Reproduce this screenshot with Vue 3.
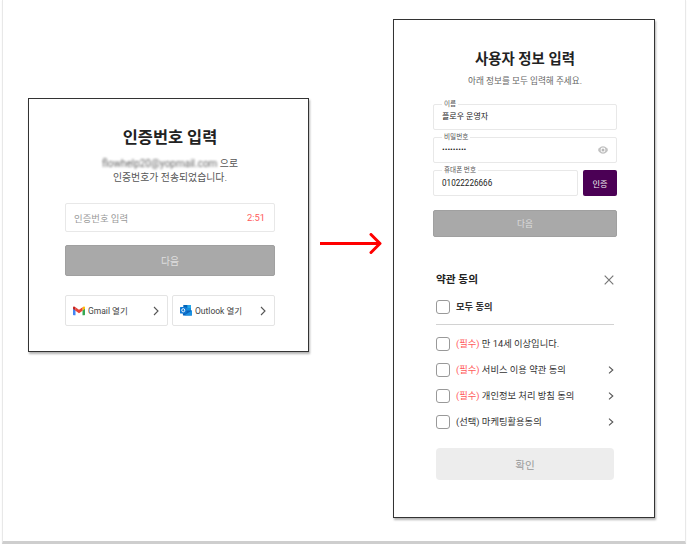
<script setup>
import { ref } from 'vue'

const name = ref('플로우 운영자')
const phone = ref('01022226666')
const terms = [
  { tag: '(필수)', label: '만 14세 이상입니다.', required: true, link: false },
  { tag: '(필수)', label: '서비스 이용 약관 동의', required: true, link: true },
  { tag: '(필수)', label: '개인정보 처리 방침 동의', required: true, link: true },
  { tag: '(선택)', label: '마케팅활용동의', required: false, link: true },
]
</script>

<template>
  <main class="board">
    <section class="card verify">
      <h1>인증번호 입력</h1>
      <p class="message"><span class="masked">flowhelp20@yopmail.com</span> 으로<br />인증번호가 전송되었습니다.</p>
      <div class="code-field">
        <span>인증번호 입력</span>
        <span class="timer">2:51</span>
      </div>
      <button class="next">다음</button>
      <div class="mail-row">
        <button class="mail">
          <svg width="12" height="10" viewBox="0 0 24 19">
            <path d="M1 18h4V8L0 4v13z" fill="#4285f4" />
            <path d="M19 18h4l1-1V4l-5 4z" fill="#34a853" />
            <path d="M19 2v7l5-4V3c0-3-3-3-5-1z" fill="#fbbc04" />
            <path d="M5 9V2l7 5 7-5v7l-7 5z" fill="#ea4335" />
            <path d="M0 3v2l5 4V2C3 0 0 0 0 3z" fill="#c5221f" />
          </svg>
          <span>Gmail 열기</span>
          <svg class="go" width="6" height="10" viewBox="0 0 6 10"><path d="M1 1l4 4-4 4" /></svg>
        </button>
        <button class="mail">
          <svg width="12" height="11" viewBox="0 0 24 22">
            <path d="M7 0h15v13H7z" fill="#1490df" />
            <path d="M7 0h8v6H7z" fill="#0364b8" />
            <path d="M15 0h7v6h-7z" fill="#28a8ea" />
            <path d="M5 11h19v9l-1 1H6z" fill="#0a5fb8" />
            <path d="M24 11v10H8z" fill="#1a91e3" />
            <rect y="4" width="13" height="13" rx="1" fill="#0f78d4" />
            <ellipse cx="6.5" cy="10.5" rx="3" ry="3.3" fill="none" stroke="#fff" stroke-width="1.8" />
          </svg>
          <span>Outlook 열기</span>
          <svg class="go" width="6" height="10" viewBox="0 0 6 10"><path d="M1 1l4 4-4 4" /></svg>
        </button>
      </div>
    </section>

    <svg class="arrow" width="62" height="22" viewBox="0 0 62 22">
      <path d="M0 10.500h59" />
      <path class="head" d="M51 1.500l9 9-9 9" />
    </svg>

    <section class="card profile">
      <h2>사용자 정보 입력</h2>
      <p class="guide">아래 정보를 모두 입력해 주세요.</p>
      <div class="field">
        <label>이름</label>
        <span>{{ name }}</span>
      </div>
      <div class="field">
        <label>비밀번호</label>
        <span class="dots">•••••••••</span>
        <svg class="eye" width="10" height="8" viewBox="0 0 20 16">
          <path d="M0 8c4-10 16-10 20 0-4 10-16 10-20 0z" fill="#c2c2c2" />
          <circle cx="10" cy="8" r="4.800" fill="#fff" />
          <circle cx="10" cy="8" r="3" fill="#b8b8b8" />
        </svg>
      </div>
      <div class="phone-row">
        <div class="field">
          <label>휴대폰 번호</label>
          <span class="number">{{ phone }}</span>
        </div>
        <button class="auth">인증</button>
      </div>
      <button class="next small">다음</button>

      <div class="terms">
        <div class="terms-head">
          <h3>약관 동의</h3>
          <svg width="10" height="10" viewBox="0 0 10 10"><path d="M.7.700l8.600 8.600M9.300.700L.7 9.300" /></svg>
        </div>
        <div class="term all"><i class="box"></i><b>모두 동의</b></div>
        <hr />
        <div v-for="term in terms" :key="term.label" class="term">
          <i class="box"></i>
          <span><em :class="{ required: term.required }">{{ term.tag }}</em> {{ term.label }}</span>
          <svg v-if="term.link" class="go" width="6" height="8" viewBox="0 0 6 8"><path d="M1 .7L4.800 4 1 7.300" /></svg>
        </div>
        <button class="confirm">확인</button>
      </div>
    </section>
  </main>
</template>

<style>
body {
  background: #fff;
}
</style>

<style scoped>
* {
  box-sizing: border-box;
}
h1, h2, h3, p, hr, button {
  margin: 0;
  padding: 0;
  border: 0;
  font-family: inherit;
}
svg {
  display: block;
  flex: none;
}
.board {
  display: flex;
  align-items: flex-start;
  width: 684px;
  height: 544px;
  margin-left: 2px;
  padding: 19px 0 0 25px;
  border: solid #e8e8e8;
  border-width: 0 1px 3px;
  border-bottom-color: #cecece;
  box-shadow: 0 1px 1px #eee;
  font-family: Roboto, "Noto Sans CJK KR", sans-serif;
  color: #333;
}
.card {
  display: flex;
  flex-direction: column;
  flex: none;
  background: #fff;
  border: 1px solid #333;
  box-shadow: 1px 2px 2px rgba(0, 0, 0, 0.3);
}
.verify {
  width: 281px;
  height: 254px;
  margin-top: 79px;
  padding: 27px 33px 0 36px;
}
.profile {
  width: 262px;
  height: 499px;
  padding: 30px 37px 0 39px;
}
h1 {
  font-size: 16.400px;
  line-height: 24px;
  text-align: center;
  color: #222;
}
.message {
  margin-top: 7px;
  font-size: 9.900px;
  line-height: 14px;
  text-align: center;
  white-space: nowrap;
  color: #555;
}
.masked {
  display: inline-block;
  font-size: 10px;
  filter: blur(0.8px);
  color: #666;
}
.code-field {
  display: flex;
  align-items: center;
  justify-content: space-between;
  height: 29px;
  margin-top: 18px;
  padding: 0 9px 0 8px;
  border: 1px solid #e8e8e8;
  border-radius: 2px;
  font-size: 9.400px;
  color: #999;
}
.timer {
  font-size: 9.400px;
  color: #ff5a5a;
}
.next {
  height: 31px;
  margin-top: 13px;
  border: 1px solid #a0a0a0;
  border-radius: 2px;
  background: #a9a9a9;
  color: #dedede;
  font-size: 9.900px;
}
.mail-row {
  display: flex;
  gap: 4px;
  margin-top: 19px;
}
.mail {
  display: flex;
  align-items: center;
  flex: 1;
  height: 31px;
  padding: 0 8px 0 7px;
  border: 1px solid #e4e4e4;
  border-radius: 2px;
  background: #fff;
  color: #444;
  font-size: 8.500px;
  white-space: nowrap;
}
.mail span {
  margin: -2px 0 0 3px;
}
.go {
  margin-left: auto;
  fill: none;
  stroke: #555;
  stroke-width: 1.100;
}
.arrow {
  margin: 214px 11px 0;
  fill: none;
  stroke: #f00;
  stroke-width: 3;
  stroke-linejoin: round;
}
.arrow .head {
  stroke-linecap: round;
}
h2 {
  font-size: 14.400px;
  line-height: 20px;
  text-align: center;
  color: #222;
}
.guide {
  margin-top: 4px;
  font-size: 8.650px;
  line-height: 14px;
  text-align: center;
  white-space: nowrap;
  color: #666;
}
.field {
  position: relative;
  display: flex;
  align-items: center;
  justify-content: space-between;
  flex: none;
  height: 26px;
  margin-top: 7px;
  padding: 0 8px;
  border: 1px solid #e8e8e8;
  border-radius: 2px;
  font-size: 8px;
  line-height: 12px;
  color: #222;
}
.guide + .field {
  margin-top: 16px;
}
.field .number {
  margin-top: -1px;
}
.field label {
  position: absolute;
  top: -6px;
  left: 8px;
  padding: 0 2px;
  background: #fff;
  font-size: 6.600px;
  line-height: 10px;
  color: #555;
}
.number {
  font-size: 8.150px;
}
.phone-row {
  display: flex;
  gap: 5px;
}
.phone-row .field {
  flex: 1;
}
.auth {
  width: 34px;
  height: 26px;
  margin-top: 7px;
  border-radius: 2px;
  background: #4b0055;
  color: #eee;
  font-size: 8.200px;
}
.small {
  height: 27px;
  margin-top: 14px;
  font-size: 8.700px;
}
.terms {
  display: flex;
  flex-direction: column;
  margin: 35px 3px 0;
}
.terms-head {
  display: flex;
  align-items: center;
  justify-content: space-between;
  height: 16px;
}
.terms-head svg {
  fill: none;
  stroke: #777;
  stroke-width: 1.200;
}
h3 {
  font-size: 10.700px;
  line-height: 16px;
  color: #222;
}
.term {
  display: flex;
  align-items: center;
  height: 26px;
  font-size: 9.300px;
  line-height: 14px;
  white-space: nowrap;
}
.term .box {
  width: 14px;
  height: 14px;
  margin-right: 6px;
  border: 1px solid #999;
  border-radius: 3px;
}
.term em {
  font-style: normal;
}
.term em.required {
  color: #ff5a5a;
}
.all {
  height: 14px;
  margin-top: 12px;
}
hr {
  height: 1px;
  margin: 10px 0 6px;
  background: #d2d2d2;
}
.confirm {
  height: 32px;
  margin-top: 13px;
  border-radius: 4px;
  background: #ededed;
  color: #999;
  font-size: 10.600px;
}
</style>
